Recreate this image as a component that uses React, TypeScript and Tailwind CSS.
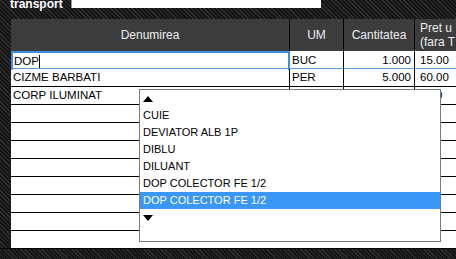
import React from "react";

const rows: { name: string; um: string; qty: string; price: string }[] = [
  { name: "CIZME BARBATI", um: "PER", qty: "5.000", price: "60.00" },
  { name: "CORP ILUMINAT", um: "", qty: "", price: "0.00" },
  { name: "", um: "", qty: "", price: "" },
  { name: "", um: "", qty: "", price: "" },
  { name: "", um: "", qty: "", price: "" },
  { name: "", um: "", qty: "", price: "" },
  { name: "", um: "", qty: "", price: "" },
  { name: "", um: "", qty: "", price: "" },
  { name: "", um: "", qty: "", price: "" },
];

const items = ["CUIE", "DEVIATOR ALB 1P", "DIBLU", "DILUANT", "DOP COLECTOR FE 1/2"];

export default function App() {
  return (
    <div
      className="relative w-[456px] h-[259px] overflow-hidden bg-[#141414] bg-[repeating-linear-gradient(45deg,#2e2e2e_0px,#2e2e2e_1px,#151515_1px,#151515_3px)]"
      style={{ fontFamily: '"Liberation Sans", Arial, sans-serif' }}
    >
      {/* top bar */}
      <div className="flex items-start h-[19px]">
        <div className="ml-[10px] mt-[-2px] text-[12px] font-bold leading-[13px] text-white">transport</div>
        <div className="ml-[8px] w-[250px] h-[8px] bg-white border-l border-[#9a9a9a]" />
      </div>

      {/* table */}
      <div className="ml-[11px] w-[460px] bg-white text-[11.5px] text-black">
        {/* header */}
        <div className="grid grid-cols-[279px_54px_71px_1fr] h-[32px] bg-[#3c3c3c] text-[#ececec] text-[12px]">
          <div className="flex items-center justify-center border-r border-black">Denumirea</div>
          <div className="flex items-center justify-center border-r border-black">UM</div>
          <div className="flex items-center justify-center border-r border-black">Cantitatea</div>
          <div className="flex flex-col justify-center pl-[5px] leading-[14px]">
            <span>Pret u</span>
            <span>(fara T</span>
          </div>
        </div>
        {/* focused row */}
        <div className="grid grid-cols-[279px_54px_71px_1fr] h-[18px] border-b border-[#5b9bd8]">
          <div className="flex items-center pl-[1px] border-2 border-[#3d8ee0] border-b-0">
            <span>DOP</span>
            <span className="inline-block w-[1.5px] h-[13px] bg-black" />
          </div>
          <div className="flex items-center pl-[2px] border-r border-black">BUC</div>
          <div className="flex items-center justify-end pr-[3px] border-r border-black">1.000</div>
          <div className="flex items-center pl-[5px]">15.00</div>
        </div>
        {rows.map((r, i) => (
          <div key={i} className="grid grid-cols-[279px_54px_71px_1fr] h-[18px] border-b border-black">
            <div className="flex items-center pl-[2px] border-r border-black">{r.name}</div>
            <div className="flex items-center pl-[2px] border-r border-black">{r.um}</div>
            <div className="flex items-center justify-end pr-[3px] border-r border-black">{r.qty}</div>
            <div className="flex items-center pl-[5px]">{r.price}</div>
          </div>
        ))}
        <div className="h-[17px]" />
      </div>
      <div className="h-[1px] bg-black" />

      {/* dropdown overlay */}
      <div className="absolute left-[139px] top-[89px] w-[302px] h-[153px] bg-white border border-[#7a7a7a] text-[11px] text-black">
        <div className="h-[17px] flex items-center pl-[3px]">
          <svg width="10" height="6" viewBox="0 0 10 6">
            <polygon points="0,6 10,6 5,0" fill="#000" />
          </svg>
        </div>
        {items.map((t) => (
          <div key={t} className="h-[17px] flex items-center pl-[3px]">{t}</div>
        ))}
        <div className="h-[17px] flex items-center pl-[3px] bg-[#3a97f5] text-white">DOP COLECTOR FE 1/2</div>
        <div className="h-[17px] flex items-center pl-[3px]">
          <svg width="10" height="6" viewBox="0 0 10 6">
            <polygon points="0,0 10,0 5,6" fill="#000" />
          </svg>
        </div>
      </div>
    </div>
  );
}
